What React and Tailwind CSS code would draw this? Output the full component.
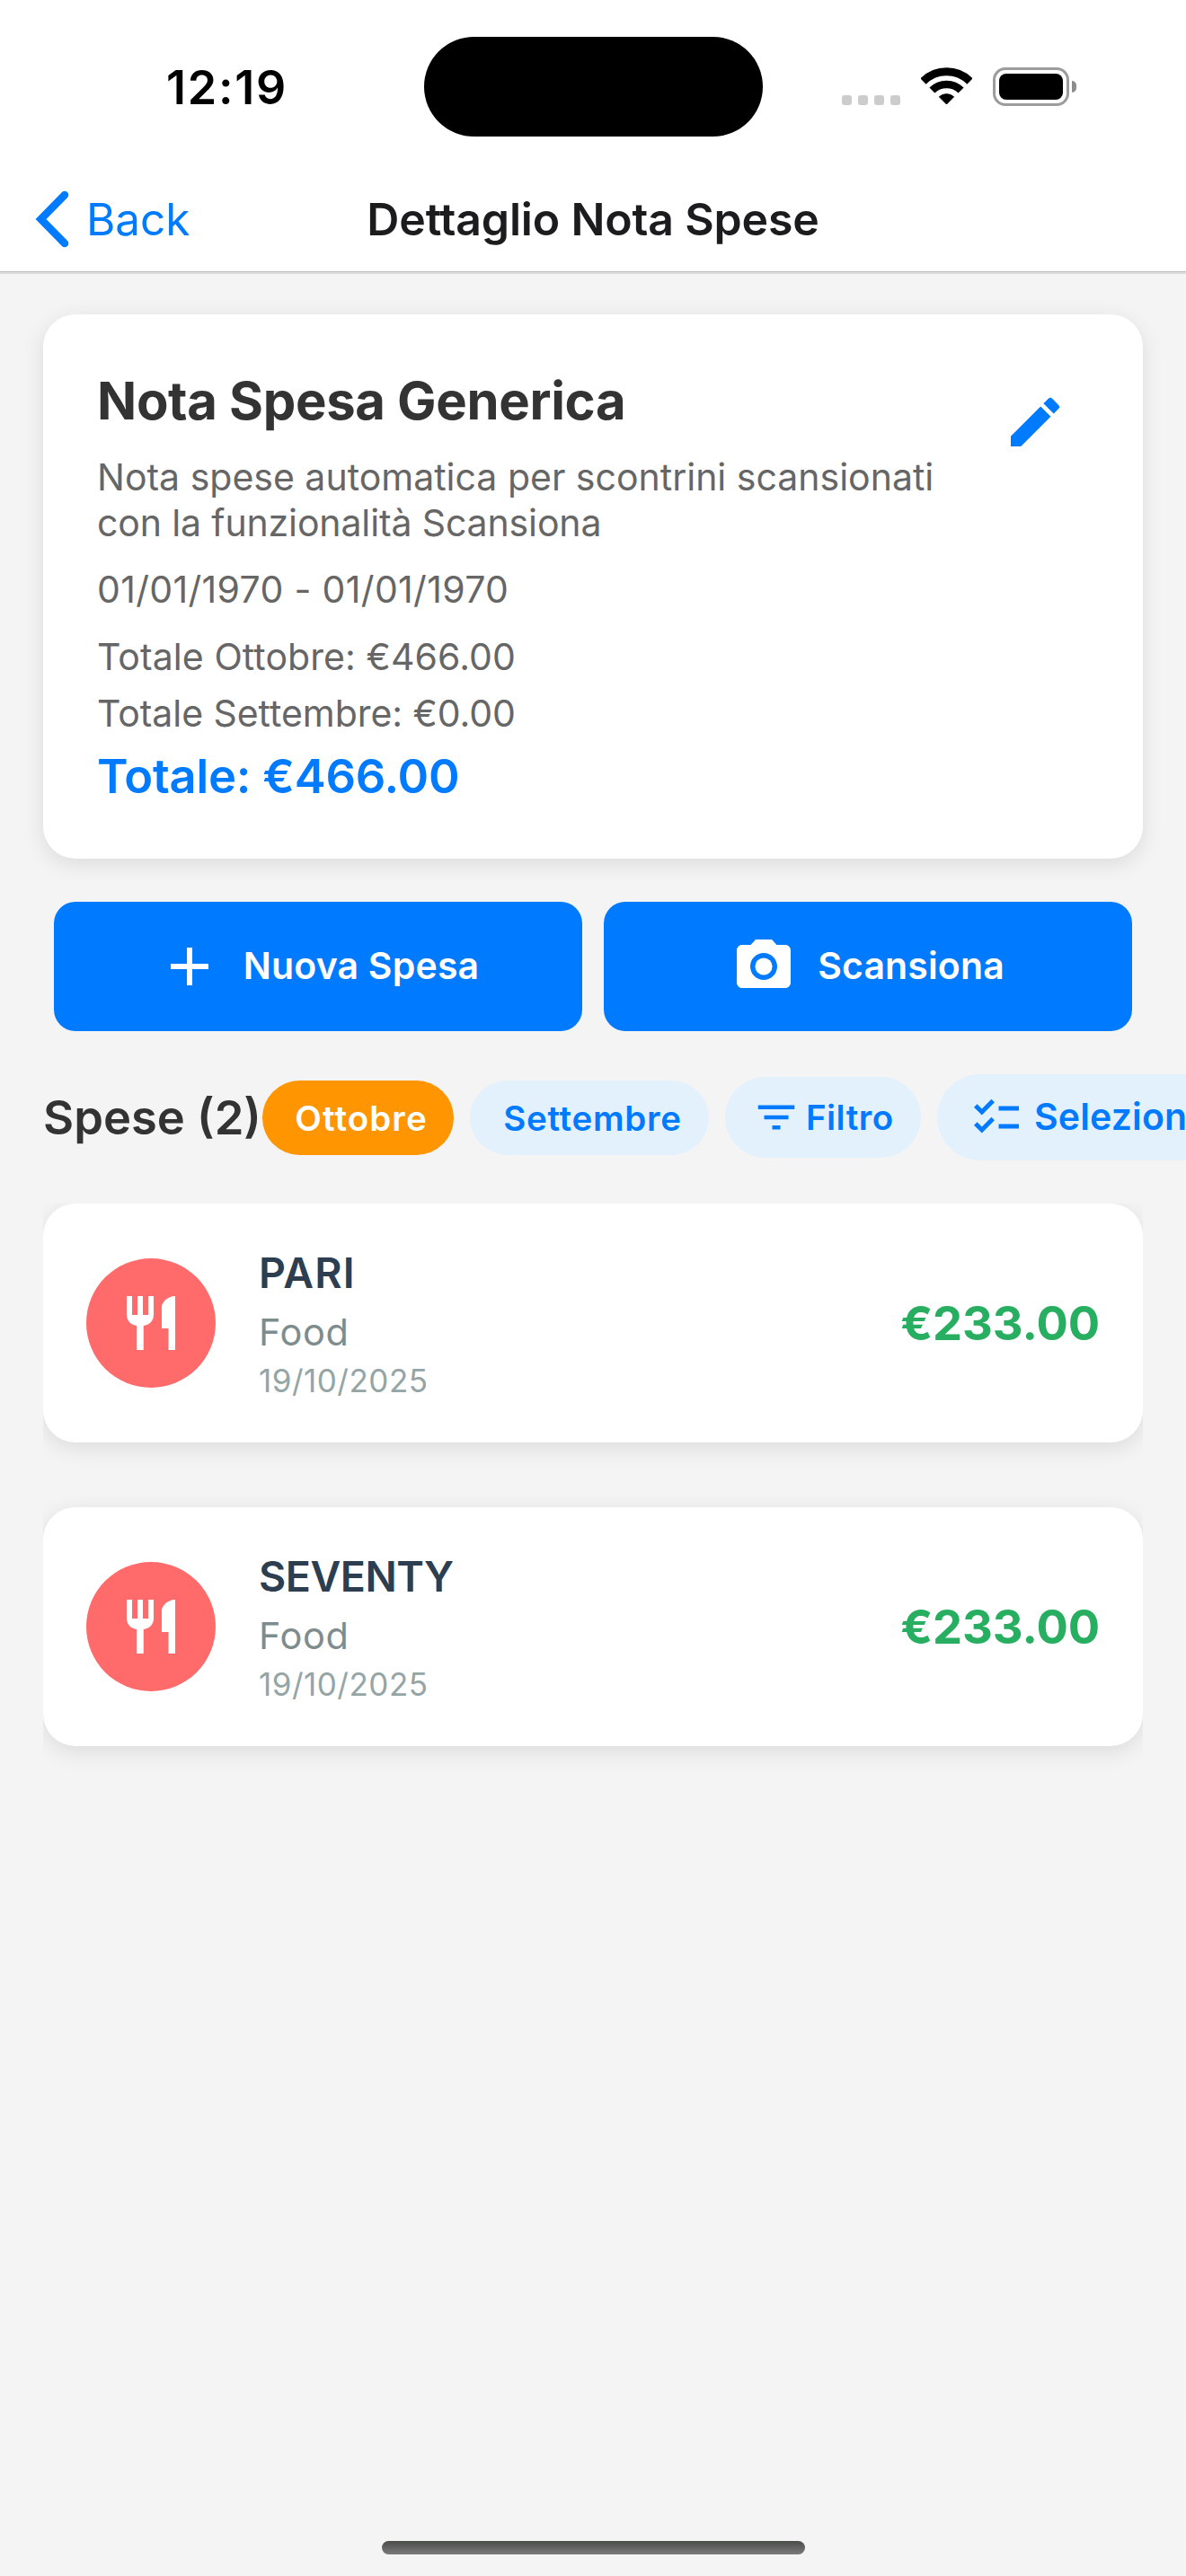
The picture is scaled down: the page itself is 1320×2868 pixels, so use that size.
import React from "react";
import { MdEdit, MdAdd, MdCameraAlt, MdFilterList, MdChecklist, MdRestaurant } from "react-icons/md";

const expenses = [
  { name: "PARI", tracking: "tracking-[1.1px]", category: "Food", date: "19/10/2025", amount: "€233.00" },
  { name: "SEVENTY", tracking: "tracking-[-0.5px]", category: "Food", date: "19/10/2025", amount: "€233.00" },
];

function WifiIcon() {
  return (
    <svg width="57" height="42" viewBox="0 0 57 42" fill="none" stroke="#000">
      <path d="M2.5 15.5A36.75 36.75 0 0 1 54.5 15.5" strokeWidth="9" />
      <path d="M12.4 25.6A22.75 22.75 0 0 1 44.6 25.6" strokeWidth="8.5" />
      <path d="M28.5 41L20.4 32.8A12 12 0 0 1 36.6 32.8Z" fill="#000" strokeWidth="1" strokeLinejoin="round" />
    </svg>
  );
}

function StatusBar() {
  return (
    <div className="flex h-[186px] items-start">
      <div className="mt-[66px] w-[472px] shrink-0 pl-[185px] text-[52px] leading-[64px] font-semibold tracking-[1.76px] text-black">
        12:19
      </div>
      <div className="mt-[41px] h-[111px] w-[377px] shrink-0 rounded-full bg-black" />
      <div className="mt-[75px] ml-[88px] flex h-[43px] items-start">
        <div className="mt-[31px] flex gap-[7px]">
          <span className="h-[11px] w-[11px] rounded-[3px] bg-[#cccccc]" />
          <span className="h-[11px] w-[11px] rounded-[3px] bg-[#cccccc]" />
          <span className="h-[11px] w-[11px] rounded-[3px] bg-[#cccccc]" />
          <span className="h-[11px] w-[11px] rounded-[3px] bg-[#cccccc]" />
        </div>
        <div className="ml-[23px]">
          <WifiIcon />
        </div>
        <div className="ml-[23px] h-[43px] w-[85px] rounded-[14px] border-[3px] border-[#9c9c9c] p-[4px]">
          <div className="h-full w-full rounded-[8px] bg-black" />
        </div>
        <div className="mt-[15px] ml-[3px] h-[13px] w-[5px] rounded-r-full bg-[#8c8c8c]" />
      </div>
    </div>
  );
}

function NavBar() {
  return (
    <div className="grid h-[116px] grid-cols-[1fr_auto_1fr] items-center">
      <button className="flex items-center text-[#007aff]">
        <svg className="ml-[37px]" width="42" height="64" viewBox="0 0 42 64" fill="none" stroke="currentColor" strokeWidth="8.5" strokeLinecap="round">
          <path d="M35 5L8.5 32L35 59" />
        </svg>
        <span className="ml-[17px] text-[49.5px] leading-[60px] tracking-[-0.1px]">Back</span>
      </button>
      <h1 className="text-[50px] leading-[60px] font-semibold tracking-[-0.17px] text-[#1c1c1e]">Dettaglio Nota Spese</h1>
      <span />
    </div>
  );
}

function SummaryCard() {
  return (
    <section className="mx-[48px] mt-[45px] flex rounded-[36px] bg-white p-[60px] shadow-[0_6px_24px_rgba(0,0,0,0.1)]">
      <div className="flex-1 text-[41px] leading-[50.5px] whitespace-nowrap text-[#666666]">
        <h2 className="text-[58px] leading-[72px] font-bold tracking-[-0.33px] text-[#333333]">Nota Spesa Generica</h2>
        <p className="mt-[24px]">
          Nota spese automatica per scontrini scansionati
          <br />
          <span className="tracking-[-0.13px]">con la funzionalità Scansiona</span>
        </p>
        <p className="mt-[24px] tracking-[0.33px]">01/01/1970 - 01/01/1970</p>
        <p className="mt-[24px] tracking-[0.08px]">Totale Ottobre: €466.00</p>
        <p className="mt-[12.5px] tracking-[-0.05px]">Totale Settembre: €0.00</p>
        <p className="mt-[14px] text-[52.5px] leading-[63px] font-semibold tracking-[-0.23px] text-[#007aff]">Totale: €466.00</p>
      </div>
      <button className="mt-[24px] mr-[24px] h-[72px] w-[72px] text-[#007aff]">
        <MdEdit className="h-[72px] w-[72px]" />
      </button>
    </section>
  );
}

function Actions() {
  return (
    <div className="mx-[60px] mt-[48px] flex gap-[24px] text-[41px] leading-[50px] font-semibold text-white">
      <button className="flex h-[144px] flex-1 items-center justify-center gap-[24px] rounded-[24px] bg-[#007aff]">
        <MdAdd className="h-[72px] w-[72px]" />
        <span className="mb-[2px] tracking-[0.19px]">Nuova Spesa</span>
      </button>
      <button className="flex h-[144px] flex-1 items-center justify-center gap-[24px] rounded-[24px] bg-[#007aff]">
        <MdCameraAlt className="h-[72px] w-[72px]" />
        <span className="mb-[2px] tracking-[0.14px]">Scansiona</span>
      </button>
    </div>
  );
}

function Filters() {
  return (
    <div className="my-[48px] ml-[48px] flex h-[96px] items-center overflow-hidden text-[38.5px] leading-[48px] font-semibold whitespace-nowrap text-[#007aff]">
      <h3 className="w-[244px] shrink-0 text-[52.5px] leading-[64px] text-[#333333]">Spese (2)</h3>
      <button className="h-[83px] w-[213px] shrink-0 rounded-[42px] bg-[#ff9500] pt-[2px] pl-[7px] tracking-[1.1px] text-white">Ottobre</button>
      <button className="ml-[18px] h-[83px] w-[266px] shrink-0 rounded-[42px] bg-[#e3f1fd] pt-[2px] pl-[7px] tracking-[0.7px]">Settembre</button>
      <button className="ml-[18px] flex h-[90px] w-[218px] shrink-0 items-center rounded-[45px] bg-[#e3f1fd] pl-[30px]">
        <MdFilterList className="h-[54px] w-[54px]" />
        <span className="ml-[6px] tracking-[0.45px]">Filtro</span>
      </button>
      <button className="ml-[18px] flex h-[96px] shrink-0 items-center rounded-[48px] bg-[#e3f1fd] px-[36px]">
        <MdChecklist className="h-[60px] w-[60px]" />
        <span className="mb-[2px] ml-[12px] text-[41px] tracking-[0.14px]">Seleziona</span>
      </button>
    </div>
  );
}

function ExpenseCard({ expense }) {
  return (
    <li className="flex items-center rounded-[36px] bg-white p-[48px] shadow-[0_6px_24px_rgba(0,0,0,0.1)]">
      <div className="flex h-[144px] w-[144px] items-center justify-center rounded-full bg-[#ff6b6b] text-white">
        <MdRestaurant className="h-[72px] w-[72px]" />
      </div>
      <div className="ml-[48px] flex-1 pt-[1px]">
        <div className={`text-[46.5px] leading-[57px] font-semibold text-[#2c3e50] ${expense.tracking}`}>{expense.name}</div>
        <div className="mt-[12px] text-[41.5px] leading-[50px] tracking-[0.6px] text-[#7f8c8d]">{expense.category}</div>
        <div className="mt-[8px] -mb-[1px] text-[35px] leading-[43px] tracking-[0.5px] text-[#95a5a6]">{expense.date}</div>
      </div>
      <div className="text-[52.5px] leading-[64px] font-bold tracking-[-0.1px] text-[#27ae60]">{expense.amount}</div>
    </li>
  );
}

export default function App() {
  return (
    <div className="flex h-[2868px] w-[1320px] flex-col overflow-hidden bg-[#f4f4f4] font-['Inter',sans-serif]">
      <header className="mb-[2px] h-[303px] shrink-0 border-b border-[#bfbfbf] bg-white shadow-[0_2px_0_#dcdcdc]">
        <StatusBar />
        <NavBar />
      </header>
      <SummaryCard />
      <Actions />
      <Filters />
      <ul className="mx-[48px] flex flex-1 flex-col gap-[72px] overflow-hidden">
        {expenses.map((expense) => (
          <ExpenseCard key={expense.name} expense={expense} />
        ))}
      </ul>
      <div className="mx-auto mb-[24px] h-[15px] w-[471px] shrink-0 rounded-full bg-linear-to-b from-[#4a4c4a] to-[#7b7b7b]" />
    </div>
  );
}
